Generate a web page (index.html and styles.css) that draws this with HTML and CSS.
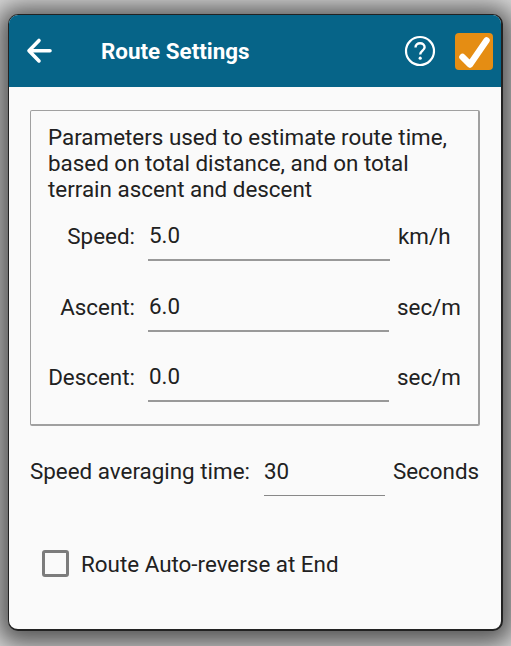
FILE: index.html
```html
<!DOCTYPE html>
<html lang="en">
<head>
  <meta charset="UTF-8">
  <meta name="viewport" content="width=device-width, initial-scale=1.0">
  <title>Route Settings</title>
  <link rel="stylesheet" href="styles.css">
</head>
<body>

  <div class="dialog">
    <div class="header">
      <svg class="back-icon" width="28" height="28" viewBox="0 0 28 28">
        <path d="M25 13.7H4.5M14 3.5L4 13.7l10 10.2" fill="none" stroke="#fff" stroke-width="3.6" stroke-linecap="round" stroke-linejoin="round"/>
      </svg>
      <h1>Route Settings</h1>
      <svg class="help-icon" width="32" height="32" viewBox="0 0 32 32">
        <circle cx="16" cy="16" r="14" fill="none" stroke="#fff" stroke-width="2.2"/>
        <path d="M11.5 12.6c0-2.6 2-4.3 4.6-4.3s4.5 1.6 4.5 3.9c0 3.4-4.4 3.4-4.4 7.2" fill="none" stroke="#fff" stroke-width="2.4"/>
        <circle cx="16.2" cy="23.2" r="1.6" fill="#fff"/>
      </svg>
      <div class="ok-button">
        <svg width="38" height="37" viewBox="0 0 38 37">
          <path d="M7.5 24l7.5 7.5L31.5 7.5" fill="none" stroke="#fff" stroke-width="6.5" stroke-linecap="round" stroke-linejoin="round"/>
        </svg>
      </div>
    </div>

    <div class="content">
      <div class="params-box">
        <p class="params-text">Parameters used to estimate route time, based on total distance, and on total terrain ascent and descent</p>
        <div class="param-row">
          <span class="param-label">Speed:</span>
          <span class="param-input">5.0</span>
          <span class="param-unit">km/h</span>
        </div>
        <div class="param-row">
          <span class="param-label">Ascent:</span>
          <span class="param-input">6.0</span>
          <span class="param-unit">sec/m</span>
        </div>
        <div class="param-row">
          <span class="param-label">Descent:</span>
          <span class="param-input">0.0</span>
          <span class="param-unit">sec/m</span>
        </div>
      </div>

      <div class="averaging-row">
        <span>Speed averaging time:</span>
        <span class="averaging-input">30</span>
        <span>Seconds</span>
      </div>

      <div class="checkbox-row">
        <span class="checkbox"></span>
        <span class="checkbox-label">Route Auto-reverse at End</span>
      </div>
    </div>
  </div>

</body>
</html>
```

FILE: styles.css
```css
/* General Styles */
* {
  box-sizing: border-box;
}

body {
  margin: 0;
  height: 646px;
  overflow: hidden;
  padding: 14px 8px 15px 8px;
  background: #d8d8d8;
  font-family: 'Roboto', sans-serif;
  font-size: 22.4px;
  color: #212121;
}

.dialog {
  height: 617px;
  display: flex;
  flex-direction: column;
  background: #fafafa;
  border: 1px solid #222;
  border-width: 1px 2px 2px 1px;
  border-radius: 10px;
  overflow: hidden;
  box-shadow: 0 3px 24px 10px rgba(0, 0, 0, 0.6);
}

/* Header */
.header {
  height: 72px;
  flex-shrink: 0;
  display: flex;
  align-items: center;
  padding: 0 8px 0 16px;
  background: #066488;
}

.back-icon {
  flex-shrink: 0;
}

h1 {
  flex: 1;
  margin: 0 0 0 48px;
  font-size: 22.4px;
  font-weight: 700;
  color: #fff;
}

.help-icon {
  flex-shrink: 0;
  margin-right: 19px;
}

.ok-button {
  width: 38px;
  height: 37px;
  margin-top: 1px;
  display: flex;
  background: #e58d13;
  border-radius: 4px;
}

/* Content */
.content {
  flex: 1;
  padding: 23px 21px 0 21px;
}

.params-box {
  height: 316px;
  padding: 13px 17px 0 17px;
  border: 2px solid #a0a0a0;
  border-width: 1px 2px 2px 1px;
  border-radius: 2px;
}

.params-text {
  margin: 0;
  line-height: 26px;
}

.param-row {
  display: flex;
  height: 70.5px;
  align-items: flex-start;
  padding-top: 21px;
}

.param-label {
  width: 87px;
  text-align: right;
  flex-shrink: 0;
}

.param-input {
  width: 242px;
  height: 39px;
  margin: -1px 8px 0 13px;
  padding: 0 1px;
  border-bottom: 2px solid #999;
}

.averaging-row {
  display: flex;
  align-items: flex-start;
  margin-top: 32px;
}

.averaging-input {
  width: 121px;
  height: 38px;
  margin: 0 8px 0 14px;
  border-bottom: 1px solid #888;
}

.checkbox-row {
  display: flex;
  align-items: center;
  gap: 12px;
  margin: 53px 0 0 12px;
}

.checkbox {
  width: 27px;
  height: 27px;
  border: 3px solid #7c7c7c;
  border-radius: 3px;
}

.checkbox-label {
  padding-top: 2px;
}
```
